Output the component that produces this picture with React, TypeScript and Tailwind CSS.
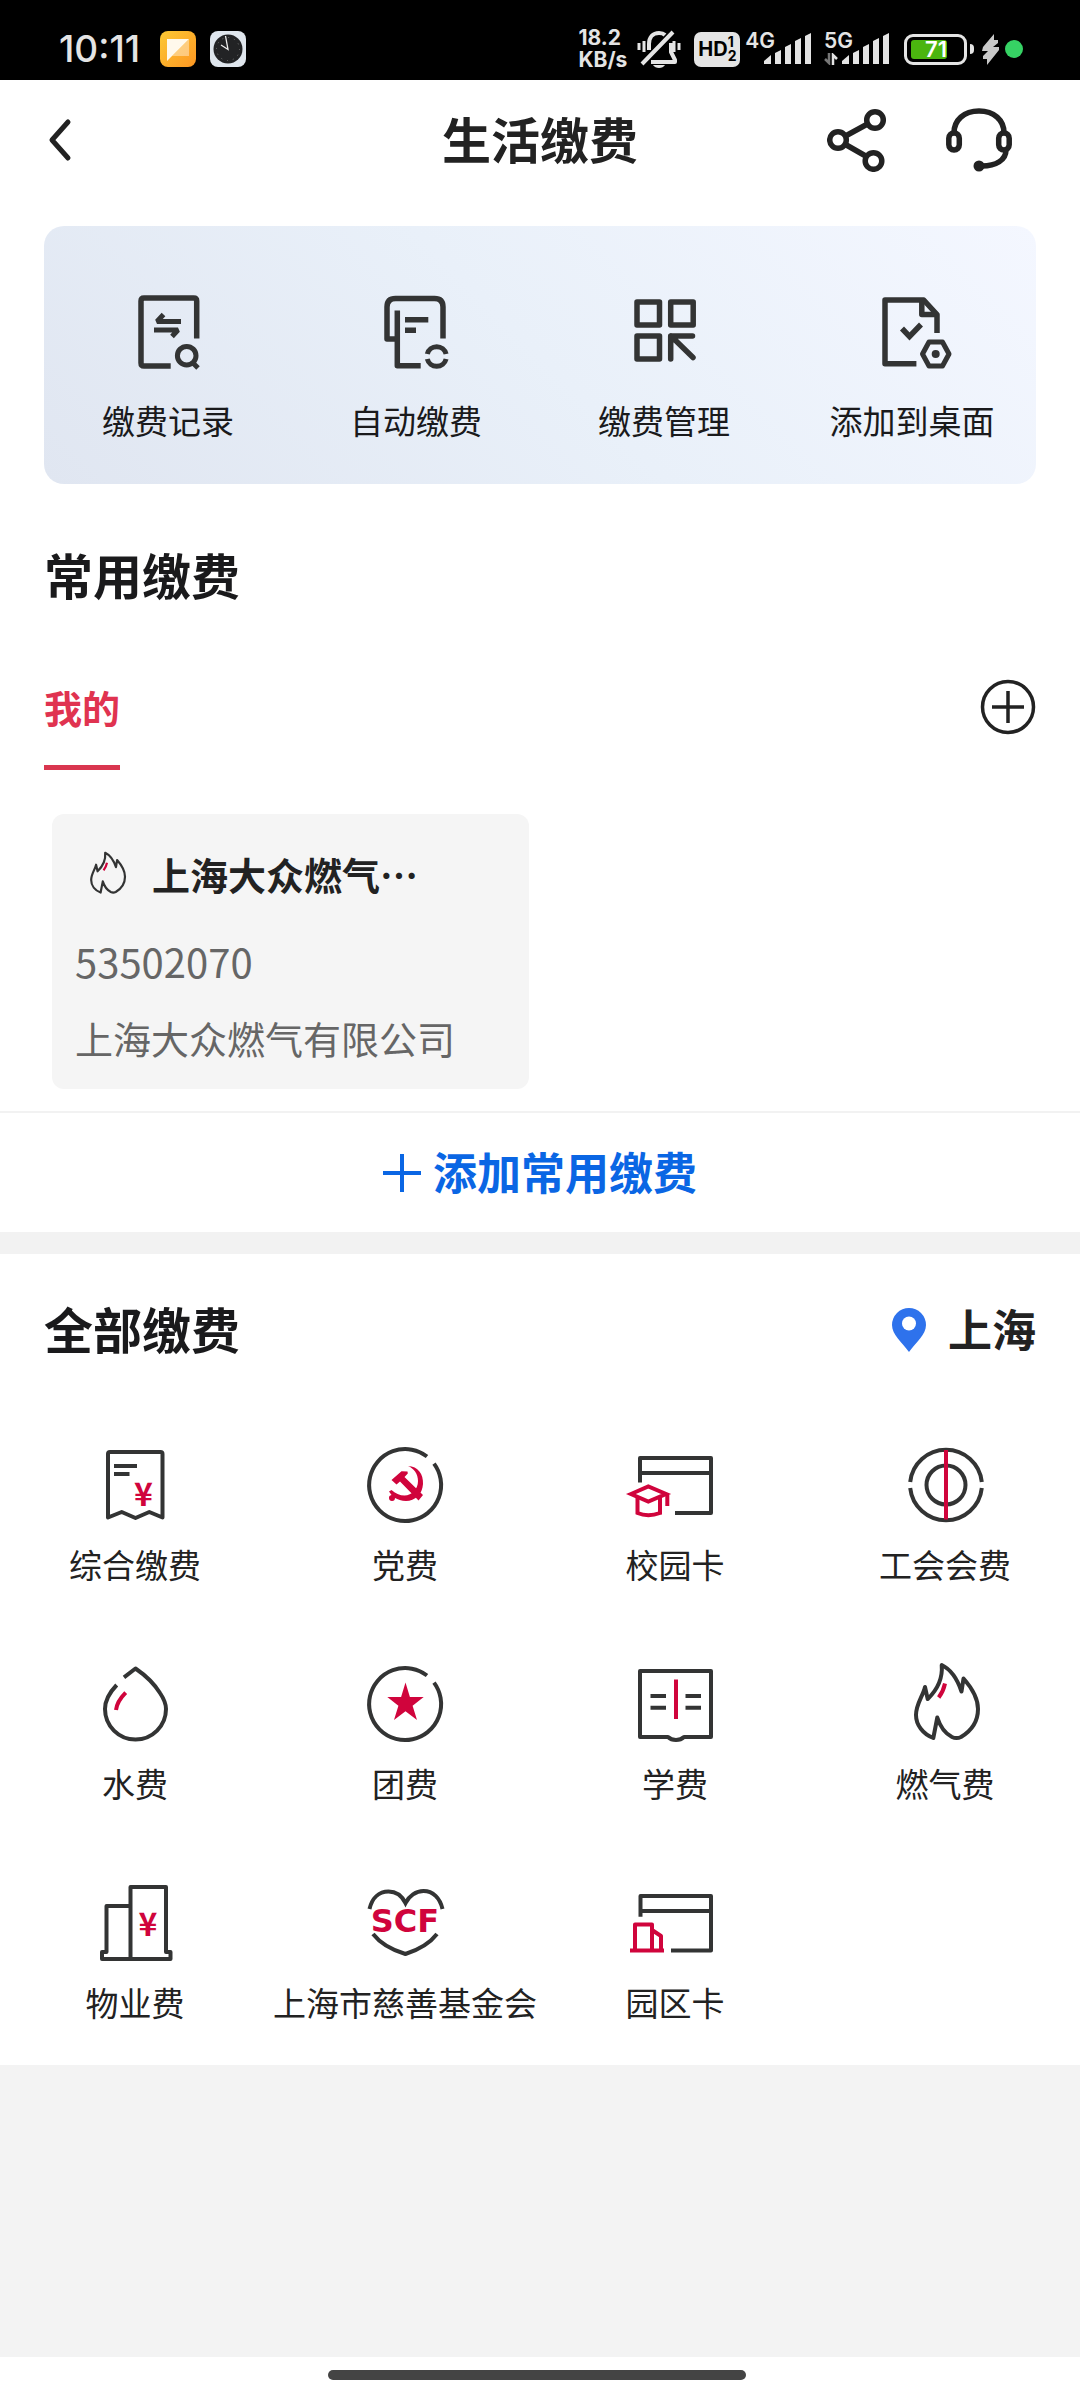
import React from 'react';

const DARK = '#333434';
const RED = '#d0043c';

type IconProps = { children: React.ReactNode; stroke?: number; className?: string };

const LineIcon: React.FC<IconProps> = ({ children, stroke = 4, className = 'size-[88px]' }) => (
  <svg
    viewBox="0 0 88 88"
    className={`shrink-0 overflow-visible ${className}`}
    fill="none"
    stroke={DARK}
    strokeWidth={stroke}
    strokeLinejoin="round"
    aria-hidden="true"
  >
    {children}
  </svg>
);

const Yen: React.FC<{ x: number; y: number }> = ({ x, y }) => (
  <text x={x} y={y} textAnchor="middle" fill={RED} stroke="none" className="font-['Noto_Sans_CJK_SC'] text-[32px] font-bold">
    ¥
  </text>
);

const Flame = () => (
  <>
    <path d="M40.7 5C49 9 56 18 60.5 31.5L62.5 18.5C70 27 77 38 77 49C77 63 70 71 60 77C57 78.4 54 78.4 51 77C43 73 39 66 36.3 57.5L32.3 78C22 74 15 65 15 55C15 44 22 36 24 27L26.7 39C35 31 42 20 40.7 5Z" />
    <path d="M44 23.5Q42.5 31 37.7 37.5" stroke={RED} />
  </>
);

const quickActions = [
  {
    label: '缴费记录',
    icon: (
      <LineIcon stroke={5.5}>
        <path d="M72.7 50.5V13Q72.7 10 69.7 10H20Q17 10 17 13V75Q17 78 20 78H46.7" />
        <path d="M57 33.5H33L39.5 26.5M30 42H54L48 48.5" strokeWidth="5" strokeLinejoin="bevel" />
        <circle cx="62.7" cy="67.7" r="9.3" strokeWidth="5" />
        <path d="M69 75L74 80" strokeWidth="5" />
      </LineIcon>
    ),
  },
  {
    label: '自动缴费',
    icon: (
      <LineIcon stroke={5.5}>
        <path d="M71 50.5V19Q71 10.5 62.5 10.5H23.5Q15 10.5 15 19V51H25.3" />
        <path d="M25.3 22.5V77.7H48.7" />
        <path d="M33 31.7H56.3M33 42.3H44" />
        <path d="M55.3 66A9.7 9.7 0 0 1 74.1 66M55.3 71A9.7 9.7 0 0 0 74.1 71" strokeWidth="5" />
      </LineIcon>
    ),
  },
  {
    label: '缴费管理',
    icon: (
      <LineIcon stroke={5.5}>
        <rect x="17" y="14" width="22.5" height="23" />
        <rect x="50.7" y="14" width="22.5" height="23" />
        <rect x="17" y="48" width="22.5" height="23" />
        <path d="M50.7 71V48H72.5M51 48L73 69.5" strokeLinecap="round" />
      </LineIcon>
    ),
  },
  {
    label: '添加到桌面',
    icon: (
      <LineIcon stroke={5.5}>
        <path d="M69 45V26.5L55.7 12H17V75.7H48.4" />
        <path d="M53.8 12V26.5H69" />
        <path d="M34 40.5L41.5 48.5L53 36.5" strokeLinejoin="miter" />
        <path d="M54.5 66L61 54H74.5L81 66L74.5 78H61Z" strokeWidth="5" />
        <circle cx="67.7" cy="66" r="4" fill={DARK} stroke="none" />
      </LineIcon>
    ),
  },
];

const services = [
  {
    label: '综合缴费',
    icon: (
      <LineIcon>
        <path d="M17 76.5V13Q17 11 19 11H69.5Q71.5 11 71.5 13V76.5L58.3 71L44.5 77L30.7 71Z" />
        <path d="M23 25H46M23 33H38.5" />
        <Yen x={52.5} y={65} />
      </LineIcon>
    ),
  },
  {
    label: '党费',
    icon: (
      <LineIcon>
        <path d="M66 15.5A36 36 0 1 0 73 22.6" />
        <g fill={RED} stroke="none">
          <path d="M47 25C57 25.5 62.5 33 62 43C61.5 53 54 60 45 60C40.5 60 36.5 58.5 34 57A3 3 0 1 1 30.5 54L28 50.5L30.5 49C34 52.5 39 54.5 43.5 54.5C51 54.5 57 48 57 40C57 33 53 27.5 47 25Z" />
          <path d="M30.5 39L40.5 30.2L46.5 30.5L46.8 32.5L43.5 36L62 54L57.5 59.5L39 40.5L35.5 43.5Z" />
        </g>
      </LineIcon>
    ),
  },
  {
    label: '校园卡',
    icon: (
      <LineIcon>
        <path d="M9 41.5V17H80V72H44M9 32H80" />
        <g stroke={RED} strokeLinejoin="miter">
          <path d="M0 53L17.3 45.5L35 53L17.3 60.5Z" />
          <path d="M6.5 57V72Q17 76.5 29 72V57M36.3 54V65" />
        </g>
      </LineIcon>
    ),
  },
  {
    label: '工会会费',
    icon: (
      <LineIcon>
        <path d="M9.2 41A36 36 0 0 1 80.8 41M9.2 47A36 36 0 0 0 80.8 47" />
        <circle cx="45" cy="44" r="19.5" />
        <path d="M45 9V78.5" stroke={RED} />
      </LineIcon>
    ),
  },
  {
    label: '水费',
    icon: (
      <LineIcon>
        <path d="M33 17.3L44.5 8.5C54 15 64 25 69 33C73 39 75 44 75 49A30.5 30.5 0 0 1 14 49C14 40 19 32 25.7 25" />
        <path d="M34.7 32.7Q26 41.5 25 50" stroke={RED} />
      </LineIcon>
    ),
  },
  {
    label: '团费',
    icon: (
      <LineIcon>
        <path d="M66 15.5A36 36 0 1 0 73 22.6" />
        <path d="M44.5 22.5L48.9 37H62.7L51.6 45.7L56 60L44.5 51.3L33 60L37.4 45.7L26.3 37H40.1Z" fill={RED} stroke="none" />
      </LineIcon>
    ),
  },
  {
    label: '学费',
    icon: (
      <LineIcon>
        <path d="M37 77H9V11H80V77H53C49 81 41 81 37 77Z" />
        <path d="M19.5 36H35M19.5 47.7H35M54.5 36H70M54.5 47.7H70" />
        <path d="M45 19.5V59" stroke={RED} />
      </LineIcon>
    ),
  },
  { label: '燃气费', icon: <LineIcon><Flame /></LineIcon> },
  {
    label: '物业费',
    icon: (
      <LineIcon>
        <path d="M39.5 80V8H75V73H79.5V80H11V73H15.5V27H39.5" />
        <Yen x={57} y={57} />
      </LineIcon>
    ),
  },
  {
    label: '上海市慈善基金会',
    icon: (
      <LineIcon>
        <path d="M8.5 30C11 19 18 12.5 27.5 12.5C35 12.5 41 17 44.5 24C48 17 55 12 62.5 12C72 12 79 19 81.5 30" strokeLinejoin="miter" />
        <path d="M12 55C19 64 31 71 44.4 75C57 71 69 64 76 55" strokeLinejoin="miter" />
        <text x="44" y="53" textAnchor="middle" fill={RED} stroke="none" className="font-['DejaVu_Sans'] text-[32px] font-bold">
          SCF
        </text>
      </LineIcon>
    ),
  },
  {
    label: '园区卡',
    icon: (
      <LineIcon>
        <path d="M9.5 37.7V17H80V71.5H40M9.5 32H80" />
        <path d="M-1 71.5H33M4 71.5V45.5H21V71.5M21 51L30 57V71.5" stroke={RED} />
      </LineIcon>
    ),
  },
];

const SignalBars = () => (
  <svg viewBox="0 0 48 32" className="h-8 w-12" fill="#e4e4e4" aria-hidden="true">
    <path d="M0 31V28L7 22V31Z" />
    <path d="M11 31V20L17 17V31Z" />
    <path d="M21 31V14L27 11V31Z" />
    <path d="M31 31V8L37 5V31Z" />
    <path d="M41 31V3L47 0V31Z" />
  </svg>
);

const StatusBar = () => (
  <div className="flex h-20 items-center justify-between bg-black pt-[18px] pr-[57px] pl-[59px] font-['Inter',sans-serif] text-[#e4e4e4]">
    <div className="flex items-center">
      <span className="w-[101px] text-[37px] leading-10 font-medium">10:11</span>
      <svg viewBox="0 0 36 36" className="mr-[14px] size-9" aria-hidden="true">
        <defs>
          <linearGradient id="note" x1="0" y1="0" x2="1" y2="1">
            <stop offset="0" stopColor="#fcc934" />
            <stop offset="1" stopColor="#fd9622" />
          </linearGradient>
        </defs>
        <rect width="36" height="36" rx="8" fill="url(#note)" />
        <path d="M29 8V25H12Z" fill="#fff" fillOpacity=".4" />
        <path d="M7 8H29L7 30Z" fill="#fff9ec" />
      </svg>
      <svg viewBox="0 0 36 36" className="size-9" aria-hidden="true">
        <rect width="36" height="36" rx="8" fill="#dfe6ed" />
        <circle cx="18" cy="18" r="14.5" fill="#222325" />
        <circle cx="18" cy="18" r="11.5" fill="none" stroke="#777" strokeWidth="1" strokeDasharray="1 5" />
        <path d="M11 14L18 18.5L15.5 5" fill="none" stroke="#eee" strokeWidth="1.3" />
      </svg>
    </div>
    <div className="flex items-center">
      <div className="mr-[10px] text-[21px] leading-[22px] font-bold">
        <div>18.2</div>
        <div>KB/s</div>
      </div>
      <svg viewBox="0 0 44 38" className="mr-[13px] h-[38px] w-11" fill="none" stroke="#e4e4e4" strokeWidth="4" aria-hidden="true">
        <path d="M12 20V14C12 7 16 3 22 3C25 3 27 4 28 5" />
        <path d="M34 13V22L38 30V32H14M5 34L36 2" strokeLinejoin="round" />
        <path d="M2 13V20M7 11V22M37 11V22M42 13V20" strokeWidth="3" />
        <path d="M16 35H28Q26 38 22 38T16 35Z" fill="#e4e4e4" stroke="none" />
      </svg>
      <div className="mr-[5px] flex h-[35px] w-[46px] items-center justify-center rounded-[7px] bg-[#e4e4e4] text-black">
        <span className="text-[20px] leading-5 font-bold">HD</span>
        <span className="flex flex-col text-[14px] leading-[14px] font-bold">
          <span>1</span>
          <span>2</span>
        </span>
      </div>
      <div className="flex items-end">
        <span className="-mr-[11px] self-start text-[21px] leading-4 font-semibold">4G</span>
        <SignalBars />
      </div>
      <div className="ml-3 flex items-end">
        <div className="-mr-[11px] flex h-8 flex-col justify-between">
          <span className="text-[21px] leading-4 font-semibold">5G</span>
          <svg viewBox="0 0 14 12" className="h-3 w-[14px]" fill="none" strokeWidth="2.5" aria-hidden="true">
            <path d="M5 0V10L1 6" stroke="#777" />
            <path d="M9 12V2L13 6" stroke="#e4e4e4" />
          </svg>
        </div>
        <SignalBars />
      </div>
      <div className="ml-[14px] flex h-[31px] w-[63px] items-center rounded-[9px] border-[3px] border-[#e4e4e4] p-1">
        <div className="flex h-[19px] w-9 items-center justify-end rounded-[3px] bg-[#4bb50f]">
          <span className="text-[22px] leading-5 font-semibold text-white">71</span>
        </div>
      </div>
      <div className="mr-2 ml-[3px] h-[10px] w-1 rounded-r bg-[#e4e4e4]" />
      <svg viewBox="0 0 17 31" className="mr-[6px] h-[31px] w-[17px]" fill="#c9c9c9" aria-hidden="true">
        <path d="M12 0L1 13L0 17H6L1 22V25H5V31L17 16V13H11L16 9V6H12Z" />
      </svg>
      <div className="size-[18px] rounded-full bg-[#36d264]" />
    </div>
  </div>
);

const Header = () => (
  <header className="flex h-[120px] items-center pr-[68px] pl-12 text-[#222]">
    <div className="flex flex-1">
      <button type="button" aria-label="返回">
        <svg viewBox="0 0 24 44" className="h-11 w-6" fill="none" stroke="currentColor" strokeWidth="5" strokeLinecap="round" strokeLinejoin="round">
          <path d="M20 4L4 22L20 40" />
        </svg>
      </button>
    </div>
    <h1 className="-mr-5 pb-1 text-[49px] leading-[64px] font-bold">生活缴费</h1>
    <div className="flex flex-1 items-center justify-end gap-[59px]">
      <button type="button" aria-label="分享">
        <svg viewBox="0 0 60 64" className="h-16 w-[60px]" fill="none" stroke="currentColor" strokeWidth="5.5">
          <circle cx="11" cy="32" r="8.3" />
          <circle cx="48" cy="12" r="8.3" />
          <circle cx="46.5" cy="53" r="8.3" />
          <path d="M18.5 28L40.5 16M18.5 36.5L39.5 48.5" />
        </svg>
      </button>
      <button type="button" aria-label="客服">
        <svg viewBox="0 0 66 64" className="h-16 w-[66px]" fill="none" stroke="currentColor" strokeWidth="5.5">
          <rect x="2.8" y="25" width="10.5" height="17" rx="5.2" />
          <rect x="52.7" y="25" width="10.5" height="17" rx="5.2" />
          <path d="M8 25C8 12 18 3 33 3S58 12 58 25M60 42C60 52 50 58 36 58" />
          <circle cx="33" cy="58" r="5.5" fill="currentColor" stroke="none" />
        </svg>
      </button>
    </div>
  </header>
);

const App: React.FC = () => {
  return (
    <div
      lang="zh-CN"
      className="flex min-h-screen flex-col bg-white font-['Noto_Sans_CJK_SC',sans-serif] text-[#1a1a1c]"
    >
      <StatusBar />
      <Header />

      <nav className="mx-11 mt-[26px] grid h-[258px] grid-cols-4 rounded-[20px] bg-linear-45 from-[#e0e6f1] via-[#e9f0f9] to-[#f4f7ff]">
        {quickActions.map((item) => (
          <button key={item.label} type="button" className="flex flex-col items-center pt-[62px]">
            {item.icon}
            <span className="mt-[22px] text-[33px] leading-[44px] whitespace-nowrap">{item.label}</span>
          </button>
        ))}
      </nav>

      {/* Saved accounts */}
      <section>
        <h2 className="mx-11 mt-[58px] text-[49px] leading-[64px] font-bold">常用缴费</h2>
        <div className="mx-11 mt-[73px] flex items-start justify-between">
          <button type="button" className="border-b-[5px] border-[#d9364f] pb-[30px] text-[38px] leading-[56px] font-bold text-[#e03350]">
            我的
          </button>
          <button type="button" aria-label="添加">
            <svg viewBox="0 0 56 56" className="size-14" fill="none" stroke="#222" strokeWidth="3.5">
              <circle cx="28" cy="28" r="25.5" />
              <path d="M28 12V44M12 28H44" />
            </svg>
          </button>
        </div>

        <div className="mt-11 ml-[52px] w-[477px] rounded-xl bg-[#f5f5f5] px-[23px] pt-8 pb-[23px]">
          <div className="flex items-center pl-2">
            <LineIcon stroke={4} className="size-12">
              <Flame />
            </LineIcon>
            <h3 className="ml-[21px] text-[38px] leading-[56px] font-bold text-[#222]">上海大众燃气…</h3>
          </div>
          <p className="mt-[31px] text-[40px] leading-[56px] text-[#666]">53502070</p>
          <p className="mt-[21px] text-[38px] leading-[56px] text-[#666]">上海大众燃气有限公司</p>
        </div>

        <button
          type="button"
          className="mt-[22px] flex h-[121px] w-full items-center justify-center gap-3 border-t-2 border-[#f2f2f2] text-[44px] font-bold text-[#0a66e4]"
        >
          <svg viewBox="0 0 38 38" className="size-[38px]" stroke="currentColor" strokeWidth="4" aria-hidden="true">
            <path d="M19 0V38M0 19H38" />
          </svg>
          <span className="pb-1">添加常用缴费</span>
        </button>
      </section>

      <div className="h-[22px] bg-[#f2f2f2]" />

      {/* All services */}
      <section className="pt-[42px] pb-[41px]">
        <div className="mx-11 flex items-center justify-between">
          <h2 className="text-[49px] leading-[64px] font-bold">全部缴费</h2>
          <button type="button" className="flex items-center gap-[22px] text-[44px] leading-[64px] font-bold text-[#222]">
            <svg viewBox="0 0 34 44" className="mt-1 h-11 w-[34px]" aria-hidden="true">
              <path d="M17 0A17 17 0 0 0 0 17C0 27 10 34 17 44C24 34 34 27 34 17A17 17 0 0 0 17 0Z" fill="#2e72ec" />
              <circle cx="17" cy="15.5" r="7" fill="#fff" />
            </svg>
            上海
          </button>
        </div>
        <div className="mt-[81px] grid grid-cols-4 gap-y-[74px]">
          {services.map((item) => (
            <button key={item.label} type="button" className="flex flex-col items-center">
              {item.icon}
              <span className="mt-[13px] text-[33px] leading-[44px] whitespace-nowrap text-[#222]">{item.label}</span>
            </button>
          ))}
        </div>
      </section>

      <div className="flex-1 bg-[#f3f3f3]" />
      <footer className="flex h-[43px] justify-center bg-white pt-[13px] pr-[6px]">
        <div className="h-[10px] w-[418px] rounded-full bg-[#444]" />
      </footer>
    </div>
  );
};

export default App;
